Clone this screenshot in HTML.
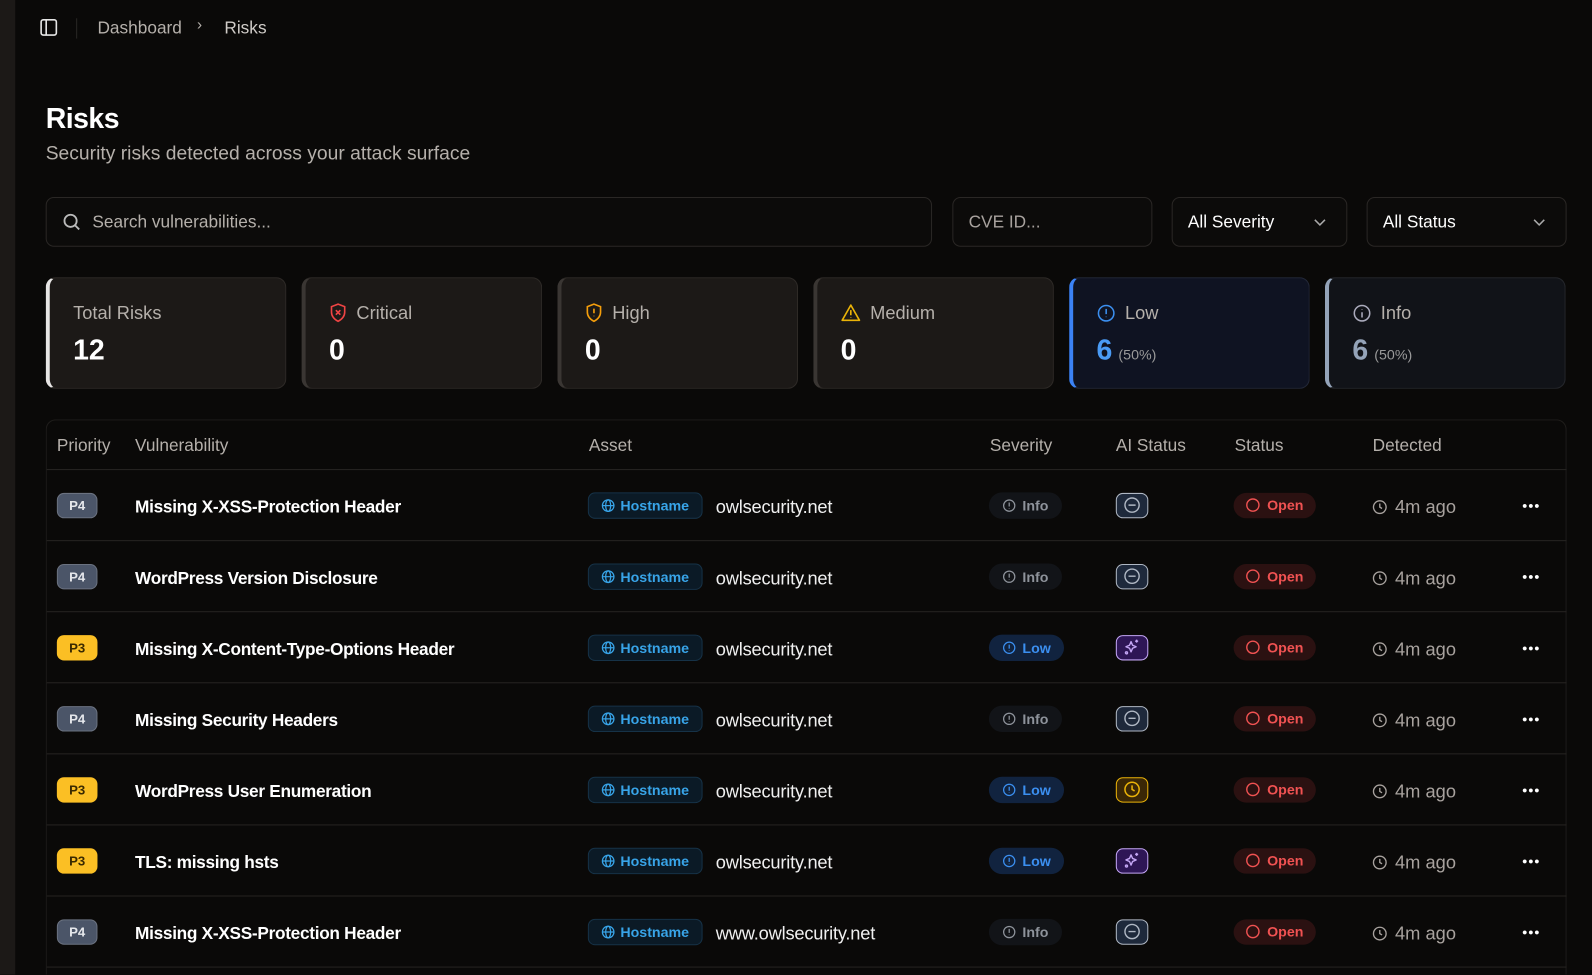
<!DOCTYPE html>
<html style="overflow:hidden"><head><meta charset="utf-8"><style>
*{box-sizing:border-box;margin:0;padding:0}
html,body{width:1592px;height:975px;overflow:hidden}
body{background:#0a0908;font-family:"Liberation Sans",sans-serif;color:#f5f5f4;position:relative}
#w{position:absolute;left:0;top:0;width:1568px;height:960px;transform:scale(1.0153);transform-origin:0 0;overflow:hidden}
.side{position:absolute;left:0;top:0;width:15px;height:960px;background:#1c1917}
.abs{position:absolute}
.input{position:absolute;top:194px;height:49px;border:1px solid #2a2725;border-radius:8px;background:#0c0b0a;font-size:17px;display:flex;align-items:center;padding-left:15px;padding-top:1px}
.card{position:absolute;top:273px;height:110px;width:237px;border:1px solid #2e2a27;border-radius:10px;background:#1c1917;padding:23px 0 0 23px}
.card .lbl{font-size:18px;color:#b5b0ab;display:flex;align-items:center;gap:9px;height:22px}
.card .num{font-size:28px;font-weight:bold;margin-top:10px;color:#fff}
.card .pct{font-size:14px;color:#9a9a9a;font-weight:normal;margin-left:6px}
.table{position:absolute;left:45px;top:413px;width:1498px;height:547px;border:1px solid #1f1d1b;border-bottom:none;border-radius:10px 10px 0 0}
.th{position:absolute;top:439px;font-size:17px;color:#b5b0ab;transform:translateY(-50%)}
.row{position:absolute;left:46px;width:1497px;height:70px;border-top:1px solid #262422}
.c{position:absolute;top:50%;transform:translateY(-50%);display:flex;align-items:center}
.t{margin-top:2px}
.pr{left:10px;width:40px;height:25px;border-radius:7px;font-size:13px;font-weight:bold;justify-content:center}
.p4{background:#4b5568;color:#e5e7eb;border:1px solid #6b7280}
.p3{background:#fbbf24;color:#3a2a00}
.vn{left:87px;font-size:17px;font-weight:bold;color:#fff;letter-spacing:-0.3px}
.host{left:533px;height:26px;padding:0 12px 0 12px;border:1px solid #163247;background:#0b1a26;border-radius:7px;color:#38a4e8;font-size:14px;font-weight:bold;gap:5px}
.dom{left:659px;font-size:18px;color:#f0f0f0;letter-spacing:-0.2px}
.sev{left:928px;height:26px;padding:0 13px;border-radius:13px;font-size:14px;font-weight:bold;gap:6px}
.sinfo{background:#121418;color:#8e939b}
.slow{background:#11233f;color:#3b8ff0}
.ai{left:1053px;width:32px;height:25px;border-radius:7px;justify-content:center}
.aig{background:#1e293b;border:1.5px solid #b0b8c4}
.aip{background:#2e1656;border:1.5px solid #c4a6f5}
.aiy{background:#3a2706;border:1.5px solid #eab308}
.open{left:1169px;height:25px;padding:0 12px;border-radius:13px;background:#2b1111;color:#f05252;font-size:14px;font-weight:bold;gap:7px}
.det{left:1305px;font-size:18px;color:#a8a29e;gap:7px}
.dots{left:1453px;font-size:9px;color:#fff;letter-spacing:0.5px}
</style></head><body><div id="w">
<div class="side"></div>
<svg class="abs" style="left:39px;top:18px" width="18" height="18" viewBox="0 0 18 18" fill="none" stroke="#e5e5e5" stroke-width="1.6"><rect x="1.5" y="1.5" width="15" height="15" rx="2"/><line x1="6.5" y1="1.5" x2="6.5" y2="16.5"/></svg>
<div class="abs" style="left:75px;top:18px;width:1px;height:20px;background:#2a2725"></div>
<div class="abs" style="left:96px;top:18px;font-size:17px;color:#b5b0ab">Dashboard</div>
<div class="abs" style="left:194px;top:16px;font-size:15px;color:#b5b0ab">›</div>
<div class="abs" style="left:221px;top:18px;font-size:17px;color:#d0ccc8">Risks</div>
<div class="abs" style="left:45px;top:101px;font-size:28px;font-weight:bold;color:#fff;letter-spacing:-0.5px">Risks</div>
<div class="abs" style="left:45px;top:141px;font-size:19px;color:#b5b0ab">Security risks detected across your attack surface</div>

<div class="input" style="left:45px;width:873px;color:#b5b0ab"><svg width="20" height="20" viewBox="0 0 20 20" fill="none" stroke="#bbb" stroke-width="1.8" style="margin-right:10px"><circle cx="8.5" cy="8.5" r="6"/><line x1="13" y1="13" x2="17" y2="17"/></svg>Search vulnerabilities...</div>
<div class="input" style="left:938px;width:197px;color:#a8a29e">CVE ID...</div>
<div class="input" style="left:1154px;width:173px;color:#fff">All Severity<svg style="position:absolute;right:20px" width="12" height="8" viewBox="0 0 12 8" fill="none" stroke="#aaa" stroke-width="1.5"><path d="M1 1.5l5 5 5-5"/></svg></div>
<div class="input" style="left:1346px;width:197px;color:#fff">All Status<svg style="position:absolute;right:20px" width="12" height="8" viewBox="0 0 12 8" fill="none" stroke="#aaa" stroke-width="1.5"><path d="M1 1.5l5 5 5-5"/></svg></div>

<div class="card" style="left:45px;border-left:4px solid #e7e5e4"><div class="lbl">Total Risks</div><div class="num">12</div></div>
<div class="card" style="left:297px;border-left:4px solid #3a3633"><div class="lbl"><svg width="18" height="20" viewBox="0 0 18 20" fill="none" stroke="#ef4444" stroke-width="1.6"><path d="M9 1.5l6.5 2.5v5.5c0 4-3 7-6.5 9-3.5-2-6.5-5-6.5-9V4z"/><path d="M6.8 7.5l4.4 4.4M11.2 7.5l-4.4 4.4"/></svg>Critical</div><div class="num">0</div></div>
<div class="card" style="left:549px;border-left:4px solid #3a3633"><div class="lbl"><svg width="18" height="20" viewBox="0 0 18 20" fill="none" stroke="#f59e0b" stroke-width="1.6"><path d="M9 1.5l6.5 2.5v5.5c0 4-3 7-6.5 9-3.5-2-6.5-5-6.5-9V4z"/><path d="M9 6v4.5M9 13v.5"/></svg>High</div><div class="num">0</div></div>
<div class="card" style="left:801px;border-left:4px solid #3a3633"><div class="lbl"><svg width="20" height="18" viewBox="0 0 20 18" fill="none" stroke="#eab308" stroke-width="1.6"><path d="M10 1.5l8.5 15H1.5z" stroke-linejoin="round"/><path d="M10 6.5v5M10 13.5v.5"/></svg>Medium</div><div class="num">0</div></div>
<div class="card" style="left:1053px;background:#0f1322;border-color:#232838;border-left:4px solid #3b82f6"><div class="lbl"><svg width="19" height="19" viewBox="0 0 20 20" fill="none" stroke="#3b8ff0" stroke-width="1.6"><circle cx="10" cy="10" r="8"/><path d="M10 5.5v5.5M10 13.5v.5"/></svg>Low</div><div class="num" style="color:#4a9bf5">6<span class="pct">(50%)</span></div></div>
<div class="card" style="left:1305px;background:#111318;border-color:#25272c;border-left:4px solid #94a3b8"><div class="lbl"><svg width="19" height="19" viewBox="0 0 20 20" fill="none" stroke="#aab" stroke-width="1.6"><circle cx="10" cy="10" r="8"/><path d="M10 9v5.5M10 6v.5"/></svg>Info</div><div class="num" style="color:#94a3b8">6<span class="pct">(50%)</span></div></div>

<div class="table"></div>
<div class="th" style="left:56px">Priority</div>
<div class="th" style="left:133px">Vulnerability</div>
<div class="th" style="left:580px">Asset</div>
<div class="th" style="left:975px">Severity</div>
<div class="th" style="left:1099px">AI Status</div>
<div class="th" style="left:1216px">Status</div>
<div class="th" style="left:1352px">Detected</div>

<svg width="0" height="0" style="position:absolute"><defs>
<symbol id="globe" viewBox="0 0 16 16"><g fill="none" stroke="#38a4e8" stroke-width="1.4"><circle cx="8" cy="8" r="6.5"/><ellipse cx="8" cy="8" rx="2.8" ry="6.5"/><path d="M1.5 8h13"/></g></symbol>
<symbol id="inf" viewBox="0 0 16 16"><g fill="none" stroke="currentColor" stroke-width="1.4"><circle cx="8" cy="8" r="6.3"/><path d="M8 4.5v4.5M8 11v.5"/></g></symbol>
<symbol id="minus" viewBox="0 0 18 18"><g fill="none" stroke="#b0b8c4" stroke-width="1.4"><circle cx="9" cy="9" r="7"/><path d="M5.5 9h7"/></g></symbol>
<symbol id="spark" viewBox="0 0 18 18"><g fill="none" stroke="#c4a6f5" stroke-width="1.4" stroke-linejoin="round"><path d="M8 3.5l1.5 3.5 3.5 1.5-3.5 1.5L8 13.5 6.5 10 3 8.5 6.5 7z"/><path d="M13.5 1.5v3M12 3h3"/><circle cx="3.5" cy="14.5" r="1"/></g></symbol>
<symbol id="clk" viewBox="0 0 18 18"><g fill="none" stroke="#eab308" stroke-width="1.5"><circle cx="9" cy="9" r="7"/><path d="M9 5v4l2.5 1.5"/></g></symbol>
<symbol id="clk2" viewBox="0 0 18 18"><g fill="none" stroke="#a8a29e" stroke-width="1.5"><circle cx="9" cy="9" r="7"/><path d="M9 5v4l2.5 1.5"/></g></symbol>
</defs></svg>

<div id="rows"></div>
</div>
<script>
var d=[["P4","Missing X-XSS-Protection Header","owlsecurity.net","Info","g"],
["P4","WordPress Version Disclosure","owlsecurity.net","Info","g"],
["P3","Missing X-Content-Type-Options Header","owlsecurity.net","Low","p"],
["P4","Missing Security Headers","owlsecurity.net","Info","g"],
["P3","WordPress User Enumeration","owlsecurity.net","Low","y"],
["P3","TLS: missing hsts","owlsecurity.net","Low","p"],
["P4","Missing X-XSS-Protection Header","www.owlsecurity.net","Info","g"],
["P4","","","",""]];
var h="";
d.forEach(function(r,i){
var top=462+i*70;
if(!r[1]){h+='<div class="row" style="top:'+top+'px"></div>';return;}
var sc=r[3]=="Low"?"slow":"sinfo";
var ai=r[4]=="g"?'<div class="c ai aig"><svg width="18" height="18"><use href="#minus"/></svg></div>':r[4]=="p"?'<div class="c ai aip"><svg width="18" height="18"><use href="#spark"/></svg></div>':'<div class="c ai aiy"><svg width="18" height="18"><use href="#clk"/></svg></div>';
h+='<div class="row" style="top:'+top+'px">'+
'<div class="c pr '+(r[0]=="P3"?"p3":"p4")+'">'+r[0]+'</div>'+
'<div class="c vn t">'+r[1]+'</div>'+
'<div class="c host"><svg width="14" height="14"><use href="#globe"/></svg>Hostname</div>'+
'<div class="c dom t">'+r[2]+'</div>'+
'<div class="c sev '+sc+'"><svg width="14" height="14" style="color:'+(r[3]=="Low"?"#3b8ff0":"#8e939b")+'"><use href="#inf"/></svg>'+r[3]+'</div>'+ai+
'<div class="c open"><svg width="14" height="14" viewBox="0 0 14 14"><circle cx="7" cy="7" r="6" fill="none" stroke="#f05252" stroke-width="1.4"/></svg>Open</div>'+
'<div class="c det t"><svg width="16" height="16" viewBox="0 0 18 18"><use href="#clk2"/></svg>4m ago</div>'+
'<div class="c dots">●●●</div></div>';
});
document.getElementById("rows").innerHTML=h;
</script>
</body></html>
